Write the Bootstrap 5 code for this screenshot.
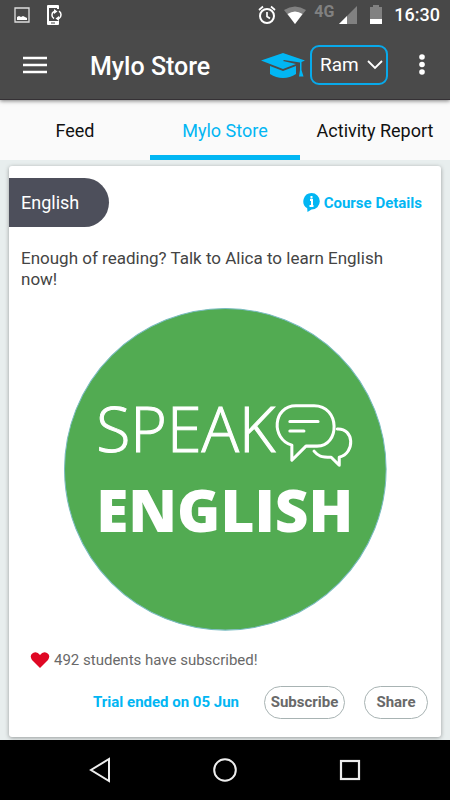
<!DOCTYPE html>
<html lang="en">
<head>
<meta charset="utf-8">
<meta name="viewport" content="width=device-width, initial-scale=1">
<title>Mylo Store</title>
<link href="https://cdn.jsdelivr.net/npm/bootstrap@5.3.0/dist/css/bootstrap.min.css" rel="stylesheet">
<style>
body { font-family: Roboto, "Liberation Sans", sans-serif; background: #e8eeee; color: #444; }
svg { display: block; flex: none; }
.top-area { background: #4a4a4a; color: #fff; box-shadow: 0 1px 4px rgba(0,0,0,.5); z-index: 1; }
.status-bar { height: 30px; padding: 0 10px 0 14px; font-size: 18px; line-height: 30px; background: #484848; }
.signal-label { font-size: 16px; line-height: 24px; color: #818181; }
.app-bar { height: 70px; padding: 0 22px; border-bottom: 1px solid #353135; }
.app-title { font-size: 25px; line-height: 32px; margin: 4px 0 0 42px; }
.user-select { width: 78px; height: 40px; border: 2px solid #08a9ea; border-radius: 9px; background: transparent; color: #fff; font-size: 19px; line-height: 24px; padding: 0 8px; appearance: none; }
.user-select option { color: #222; }
.user-wrap svg { right: 5px; top: 14px; pointer-events: none; }
.tab-row { background: #fafafa; }
.tab-row .nav-link { height: 60px; padding: 6px 0 0; border-bottom: 5px solid transparent; color: #111; font-size: 18px; line-height: 24px; border-radius: 0; }
.tab-row .nav-link.active { color: #02b6f3; border-color: #02b6f3; }
.page-area { padding: 6px 9px 3px; }
.course-card { border: 0; border-radius: 3px; box-shadow: 0 1px 4px rgba(0,0,0,.35); padding: 12px 13px 18px 0; }
.subject-tag { width: 100px; height: 49px; border-radius: 0 25px 25px 0; background: #4d4f5b; color: #fff; padding-left: 12px; font-size: 18px; line-height: 24px; }
.sky { color: #02b6f3; }
.action-text { font-size: 15px; line-height: 20px; }
.details-link { margin-right: 6px; }
.card-copy { font-size: 17px; line-height: 21px; margin: 21px 24px 18px 12px; }
.logo-wrap { width: 77%; max-width: 420px; margin-left: 14px; }
.subscribers { color: #696969; font-size: 15px; line-height: 20px; margin: 19px 0 16px 21px; }
.pill-btn { height: 33px; padding: 0; color: #696969; border: 1px solid #a8b3b3; border-radius: 17px; font-size: 15px; line-height: 20px; }
.pill-wide { width: 81px; }
.pill-short { width: 64px; }
.pill-row { gap: 19px; margin-left: 25px; }
.system-nav { height: 60px; background: #000; padding: 0 88px; }
</style>
<script src="https://cdn.jsdelivr.net/npm/bootstrap@5.3.0/dist/js/bootstrap.bundle.min.js"></script>
</head>
<body class="min-vh-100 d-flex flex-column">
<header class="top-area position-relative">
  <div class="status-bar d-flex align-items-center">
    <svg width="16" height="16" viewBox="0 0 16 16"><path d="M1 1h14v14H1z" fill="none" stroke="#ddd" stroke-width="1.3"/><path d="M3 13V10l2-1 2 1 2-1 2 1 2 1v2z" fill="#fff"/></svg>
    <svg class="ms-3" width="17" height="22" viewBox="0 0 17 22"><path d="M12 5V2H2v18h10v-3" fill="none" stroke="#fff" stroke-width="2" stroke-linejoin="round"/><path d="M1 17h12v3H1zM1 2h12v2H1z" fill="#fff"/><path d="M5 19h4" stroke="#484848"/><path d="M8 14.500A4 4 0 0 1 8 7.500M13 7a4.500 4.500 0 0 1 0 7.500" fill="none" stroke="#fff" stroke-width="1.500"/><path d="M8 5l3.500 2.500L8 10zM13 12v5l-3.500-2.500z" fill="#fff"/></svg>
    <div class="d-flex align-items-center ms-auto">
      <svg width="18" height="20" viewBox="0 0 18 20"><circle cx="9" cy="11" r="7" fill="none" stroke="#fff" stroke-width="2"/><path d="M1 5l4-3.500M17 5l-4-3.500M9 7v4.500l3 2" fill="none" stroke="#fff" stroke-width="1.700"/></svg>
      <svg class="ms-2" width="22" height="20" viewBox="0 0 22 20"><path d="M0 5Q11-2 22 5L11 19z" fill="#818181"/><path d="M3.500 9Q11 4 18.500 9L11 19z" fill="#fff"/></svg>
      <span class="signal-label align-self-start fw-bold ms-2">4G</span>
      <svg class="ms-1 me-1" width="20" height="20" viewBox="0 0 20 20"><path d="M19 1v18H1z" fill="#818181"/><path d="M9 11v8H1z" fill="#fff"/></svg>
      <svg class="ms-2" width="12" height="20" viewBox="0 0 12 20"><path d="M3 0h6v2h3v17H0V2h3z" fill="#818181"/><path d="M0 14h12v5H0z" fill="#fff"/></svg>
      <span class="fw-medium ms-2 ps-1">16:30</span>
    </div>
  </div>
  <div class="app-bar d-flex align-items-center">
    <button class="btn p-0 border-0" aria-label="Menu"><svg width="26" height="20" viewBox="0 0 26 20"><path d="M1 3h24M1 10h24M1 17h24" stroke="#fff" stroke-width="2.500"/></svg></button>
    <h1 class="app-title fw-medium">Mylo Store</h1>
    <svg class="ms-auto" width="46" height="28" viewBox="0 0 46 28"><path d="M1 9.500L23 2l22 7.500-3.500 1.500v8l2 6.500h-4.500l1-6.500v-7.500L24 9l-1 1 13 3-13 5z" fill="#02b6f3"/><path d="M10 15l13 5 13-5v8q-6 4-13 4t-13-4z" fill="#02b6f3"/></svg>
    <div class="user-wrap position-relative ms-1">
      <select class="user-select" aria-label="Student"><option>Ram</option></select>
      <svg class="position-absolute" width="16" height="12" viewBox="0 0 16 12"><path d="M1 2l7 7 7-7" fill="none" stroke="#fff" stroke-width="1.800"/></svg>
    </div>
    <button class="btn p-0 border-0 ms-4 ps-1" aria-label="More"><svg width="12" height="24" viewBox="0 0 12 24"><g fill="#fff"><circle cx="6" cy="4" r="2.800"/><circle cx="6" cy="11.500" r="2.800"/><circle cx="6" cy="19" r="2.800"/></g></svg></button>
  </div>
</header>
<nav class="tab-row">
  <div class="nav row g-0">
    <a class="nav-link col d-flex align-items-center justify-content-center" href="#">Feed</a>
    <a class="nav-link active col d-flex align-items-center justify-content-center" href="#">Mylo Store</a>
    <a class="nav-link col d-flex align-items-center justify-content-center" href="#">Activity Report</a>
  </div>
</nav>
<main class="page-area flex-grow-1">
  <article class="card course-card">
    <div class="d-flex align-items-center justify-content-between">
      <span class="subject-tag d-flex align-items-center">English</span>
      <a href="#" class="details-link sky action-text fw-bold text-decoration-none d-flex align-items-center gap-1"><svg width="17" height="19" viewBox="0 0 17 19"><path d="M8.500 0a8.300 8.300 0 0 1 0 16.600L4.500 19l-.3-3.700A8.300 8.300 0 0 1 8.500 0z" fill="#02b6f3"/><path d="M8.500 3v2.500M7 7h2v6M6.500 13h4" fill="none" stroke="#fff" stroke-width="2"/></svg>Course Details</a>
    </div>
    <p class="card-copy">Enough of reading? Talk to Alica to learn English now!</p>
    <div class="logo-wrap align-self-center">
      <svg width="100%" viewBox="0 0 320 320" role="img" aria-label="Speak English">
        <circle cx="160" cy="160" r="159.500" fill="#52ab52" stroke="#79bbc0" stroke-width="1"/>
        <g fill="#fff" font-family="'Open Sans', 'Noto Sans', sans-serif">
          <text x="32" y="143" font-size="62" font-weight="300" stroke="#fff" stroke-width="1">SPEAK</text>
          <text x="32" y="222" font-size="58" font-weight="800">ENGLISH</text>
        </g>
        <g fill="none" stroke="#fff" stroke-width="3" stroke-linejoin="round" stroke-linecap="round">
          <path d="M230 97h18c26 0 26 40 3 40h-11l-14 14v-15c-21-6-19-39 4-39z"/>
          <path d="M224 112.500h28M224 122h14"/>
          <path d="M271 120c17-1 18 24 2 28v8l-8-8c-10 0-13-1-17-6"/>
        </g>
      </svg>
    </div>
    <div class="subscribers d-flex align-items-center"><svg width="20" height="18" viewBox="0 0 20 18"><path d="M10 17L2 9Q-1 4 3 2 7 0 10 4q3-4 7-2 4 2 1 7z" fill="#df0824"/></svg><span class="ms-1">492 students have subscribed!</span></div>
    <div class="d-flex align-items-center justify-content-end">
      <span class="sky action-text fw-bold">Trial ended on 05 Jun</span>
      <div class="pill-row d-flex"><button class="btn pill-btn pill-wide fw-bold">Subscribe</button><button class="btn pill-btn pill-short fw-bold">Share</button></div>
    </div>
  </article>
</main>
<footer class="system-nav d-flex align-items-center justify-content-between">
  <button class="btn p-0 border-0" aria-label="Back"><svg width="24" height="26" viewBox="0 0 24 26"><path d="M21 2v22L3 13z" fill="none" stroke="#eee" stroke-width="2"/></svg></button>
  <button class="btn p-0 border-0" aria-label="Home"><svg width="24" height="24" viewBox="0 0 24 24"><circle cx="12" cy="12" r="10.800" fill="none" stroke="#eee" stroke-width="2"/></svg></button>
  <button class="btn p-0 border-0" aria-label="Recent apps"><svg width="24" height="24" viewBox="0 0 24 24"><rect x="3" y="3" width="18" height="18" fill="none" stroke="#eee" stroke-width="2.200"/></svg></button>
</footer>
</body>
</html>
